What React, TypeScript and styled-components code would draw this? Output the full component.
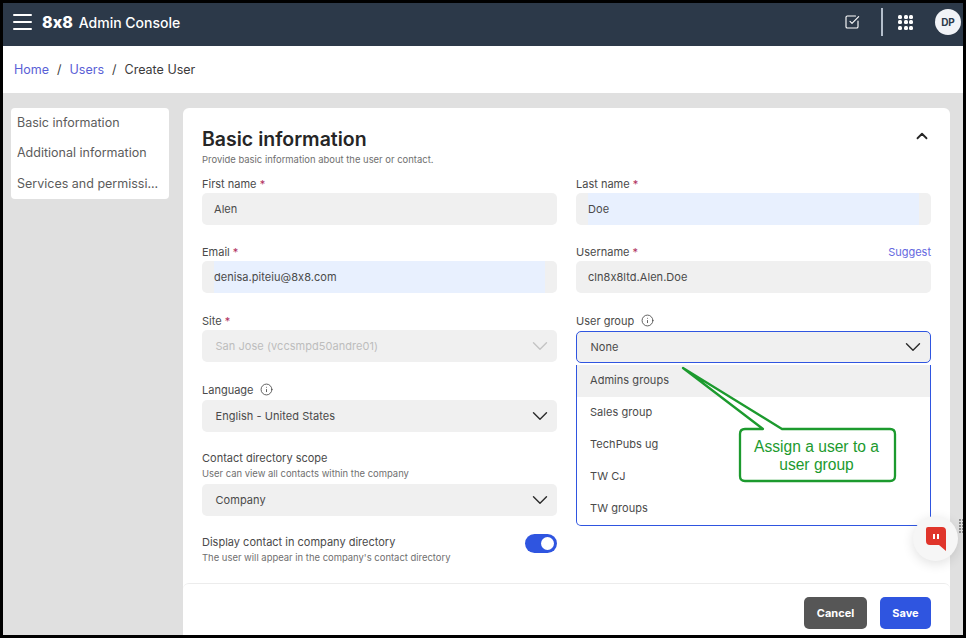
import React from 'react';
import styled, {createGlobalStyle} from 'styled-components';
import {ChevronDown, ChevronUp, Info, SquareCheckBig} from 'lucide-react';

const GlobalStyle = createGlobalStyle`
  html, body { margin: 0; padding: 0; }
  body { font-family: Inter, "Liberation Sans", sans-serif; color: #3b3b3b; }
  * { box-sizing: border-box; }
`;

const Page = styled.div`
  position: relative;
  width: 966px;
  height: 638px;
  border: 3px solid #000;
  background: #e0e0e0;
  display: flex;
  flex-direction: column;
  overflow: hidden;
`;

const TopBar = styled.header`
  height: 43px;
  flex: none;
  background: #2c3949;
  color: #fff;
  display: flex;
  align-items: center;
  padding: 0 10px 5px;
`;

const MenuBtn = styled.div`
  display: flex;
  flex-direction: column;
  gap: 5px;
  width: 19px;
  margin-right: 10px;
  > i { height: 2px; background: #fff; border-radius: 1px; }
`;

const Logo = styled.span`
  font-size: 16px;
  font-weight: 800;
  font-feature-settings: "calt" 0;
  margin-right: 6px;
`;

const AppName = styled.span`
  font-size: 14px;
  font-weight: 500;
`;

const TopActions = styled.div`
  margin-left: auto;
  display: flex;
  align-items: center;
`;

const Divider = styled.div`
  width: 2px;
  height: 28px;
  background: #b4bfcc;
  margin: 0 15px 0 21px;
`;

const AppsGrid = styled.div`
  display: grid;
  grid-template-columns: repeat(3, 4px);
  gap: 1.5px;
  margin-right: 22px;
  > i { width: 4px; height: 4px; border-radius: 1.5px; background: #fff; }
`;

const Avatar = styled.div`
  width: 26px;
  height: 26px;
  border-radius: 50%;
  background: #f1f3f7;
  color: #2c3949;
  font-size: 10px;
  font-weight: 700;
  display: flex;
  align-items: center;
  justify-content: center;
  margin-right: -8px;
`;

const Breadcrumbs = styled.nav`
  height: 47px;
  flex: none;
  background: #fff;
  display: flex;
  align-items: center;
  padding-left: 11px;
  font-size: 12.5px;
  color: #3b3b3b;
`;

const Crumb = styled.a`
  color: #5a5fd6;
`;

const Sep = styled.span`
  margin: 0 8px;
`;

const Body = styled.div`
  flex: 1;
  display: flex;
  align-items: flex-start;
  gap: 14px;
  padding: 15px 13px 0 8px;
  min-height: 0;
`;

const SideNav = styled.aside`
  width: 158px;
  flex: none;
  height: 91px;
  background: #fff;
  border-radius: 4px;
  padding: 0 6px;
`;

const SideItem = styled.div`
  height: 30.3px;
  display: flex;
  align-items: center;
  padding-bottom: 1px;
  font-size: 12.5px;
  color: #5c5c5c;
  white-space: nowrap;
  overflow: hidden;
`;

const Card = styled.section`
  flex: 1;
  height: 527px;
  background: #fff;
  border-radius: 6px 6px 0 0;
  display: flex;
  flex-direction: column;
`;

const CardBody = styled.div`
  flex: 1;
  padding: 20px 19px 0;
`;

const CardHead = styled.div`
  display: flex;
  justify-content: space-between;
  align-items: flex-start;
`;

const Title = styled.h2`
  margin: 0 0 3px;
  font-size: 19.5px;
  line-height: 22px;
  font-weight: 600;
  color: #262626;
`;

const Sub = styled.div`
  font-size: 9.45px;
  line-height: 13px;
  color: #6f6f6f;
`;

const Collapse = styled.div`
  display: flex;
  margin-top: -1px;
  color: #262626;
`;

const Columns = styled.div`
  display: grid;
  grid-template-columns: 355px 355px;
  column-gap: 19px;
  margin-top: 9px;
`;

const Column = styled.div`
  display: flex;
  flex-direction: column;
`;

const Field = styled.div<{$gap?: number}>`
  margin-bottom: ${p => p.$gap ?? 18}px;
`;

const LabelRow = styled.div<{$after?: number}>`
  display: flex;
  align-items: center;
  justify-content: space-between;
  height: 17px;
  margin-bottom: ${p => p.$after ?? 1}px;
  font-size: 11px;
  color: #4a4a4a;
`;

const LabelText = styled.span`
  display: flex;
  align-items: center;
  gap: 7px;
`;

const Required = styled.b`
  color: #b0305c;
  font-weight: 400;
`;

const Suggest = styled.a`
  color: #6468e0;
  font-size: 11px;
`;

const Control = styled.div<{$disabled?: boolean; $focus?: boolean; $select?: boolean}>`
  height: 32px;
  margin-top: ${p => (p.$focus ? 2 : 0)}px;
  border-radius: 5px;
  background: #f0f0f0;
  color: ${p => (p.$disabled ? '#bdbdbd' : '#4a4a4a')};
  border: ${p => (p.$focus ? '1px solid #2f55e0' : 'none')};
  display: flex;
  align-items: center;
  justify-content: space-between;
  padding: ${p => (p.$select ? '0 4px 0 13.5px' : '0 12px')};
  font-size: 11px;
  letter-spacing: 0.05px;
`;

// browser autofill paints only the inner input, the grey padding stays
const Autofilled = styled.span`
  flex: 1;
  align-self: stretch;
  display: flex;
  align-items: center;
  background: #e8f0fe;
`;

const Hint = styled.div`
  font-size: 9.45px;
  line-height: 12px;
  color: #6f6f6f;
  margin-bottom: 4px;
`;

const ToggleRow = styled.div`
  display: flex;
  justify-content: space-between;
  align-items: flex-start;
`;

const ToggleLabel = styled.div`
  font-size: 11px;
  line-height: 15px;
  margin-top: 1px;
  margin-bottom: 2px;
  color: #4a4a4a;
`;

const Toggle = styled.div`
  width: 32px;
  height: 19px;
  border-radius: 10px;
  background: #2f55e0;
  display: flex;
  align-items: center;
  justify-content: flex-end;
  padding-right: 3px;
  > i { width: 13px; height: 13px; border-radius: 50%; background: #fff; }
`;

const Footer = styled.footer`
  height: 52px;
  flex: none;
  border-top: 1px solid #ececec;
  border-radius: 6px 6px 0 0;
  display: flex;
  justify-content: flex-end;
  align-items: flex-start;
  gap: 13px;
  padding: 13px 19px 0 0;
`;

const Button = styled.button<{$primary?: boolean}>`
  width: ${p => (p.$primary ? 51 : 63)}px;
  height: 32px;
  border: none;
  border-radius: 5px;
  background: ${p => (p.$primary ? '#2f55e0' : '#565656')};
  color: #fff;
  font: 700 11px Inter, sans-serif;
`;

const Dropdown = styled.ul`
  position: absolute;
  left: 573px;
  top: 362px;
  width: 355px;
  height: 161px;
  margin: 0;
  padding: 0;
  list-style: none;
  background: #fff;
  border: 1px solid #2f55e0;
  border-top: none;
  border-radius: 0 0 5px 5px;
`;

const Option = styled.li<{$active?: boolean}>`
  height: 32px;
  display: flex;
  align-items: center;
  padding: 0 0 2px 13px;
  font-size: 11px;
  letter-spacing: 0.05px;
  color: #4a4a4a;
  background: ${p => (p.$active ? '#f0f0f0' : 'transparent')};
`;

const Callout = styled.svg`
  position: absolute;
  left: 678px;
  top: 362px;
`;

const CalloutText = styled.div`
  position: absolute;
  left: 736px;
  top: 427px;
  width: 155px;
  height: 52px;
  display: flex;
  align-items: center;
  justify-content: center;
  text-align: center;
  font-family: "Liberation Sans", sans-serif;
  font-size: 15.6px;
  line-height: 18.5px;
  color: #1c9a2e;
`;

const ChatBubble = styled.div`
  position: absolute;
  left: 910px;
  top: 513px;
  width: 45px;
  height: 45px;
  border-radius: 50%;
  background: #f6f6f6;
  box-shadow: 0 3px 12px rgba(0, 0, 0, 0.12);
  display: flex;
  align-items: center;
  justify-content: center;
`;

const Grip = styled.div`
  position: absolute;
  left: 956px;
  top: 516px;
  display: grid;
  grid-template-columns: repeat(2, 1.5px);
  gap: 1.5px;
  > i { width: 1.5px; height: 1.5px; background: #8a8a8a; }
`;

function Select({value, disabled, focus}: {value: string; disabled?: boolean; focus?: boolean}) {
  return (
    <Control $select $disabled={disabled} $focus={focus}>
      {value}
      <ChevronDown size={26} strokeWidth={1.3} color={disabled ? '#c4c4c4' : '#2b2b2b'} />
    </Control>
  );
}

const groups = ['Admins groups', 'Sales group', 'TechPubs ug', 'TW CJ', 'TW groups'];

export default function App() {
  return (
    <Page>
      <GlobalStyle />
      <TopBar>
        <MenuBtn><i /><i /><i /></MenuBtn>
        <Logo>8x8</Logo>
        <AppName>Admin Console</AppName>
        <TopActions>
          <SquareCheckBig size={16} strokeWidth={1.7} />
          <Divider />
          <AppsGrid>{Array.from({length: 9}).map((_, i) => <i key={i} />)}</AppsGrid>
          <Avatar>DP</Avatar>
        </TopActions>
      </TopBar>
      <Breadcrumbs>
        <Crumb>Home</Crumb><Sep>/</Sep><Crumb>Users</Crumb><Sep>/</Sep>Create User
      </Breadcrumbs>
      <Body>
        <SideNav>
          <SideItem>Basic information</SideItem>
          <SideItem>Additional information</SideItem>
          <SideItem>Services and permissi...</SideItem>
        </SideNav>
        <Card>
          <CardBody>
            <CardHead>
              <div>
                <Title>Basic information</Title>
                <Sub>Provide basic information about the user or contact.</Sub>
              </div>
              <Collapse><ChevronUp size={18} strokeWidth={2.4} /></Collapse>
            </CardHead>
            <Columns>
              <Column>
                <Field>
                  <LabelRow><LabelText><span>First name <Required>*</Required></span></LabelText></LabelRow>
                  <Control>Alen</Control>
                </Field>
                <Field $gap={19}>
                  <LabelRow><LabelText><span>Email <Required>*</Required></span></LabelText></LabelRow>
                  <Control><Autofilled>denisa.piteiu@8x8.com</Autofilled></Control>
                </Field>
                <Field $gap={19}>
                  <LabelRow><LabelText><span>Site <Required>*</Required></span></LabelText></LabelRow>
                  <Select value="San Jose (vccsmpd50andre01)" disabled />
                </Field>
                <Field $gap={17}>
                  <LabelRow $after={2}><LabelText>Language <Info size={13} strokeWidth={1.6} /></LabelText></LabelRow>
                  <Select value="English - United States" />
                </Field>
                <Field>
                  <LabelRow $after={2}><LabelText>Contact directory scope</LabelText></LabelRow>
                  <Hint>User can view all contacts within the company</Hint>
                  <Select value="Company" />
                </Field>
                <ToggleRow>
                  <div>
                    <ToggleLabel>Display contact in company directory</ToggleLabel>
                    <Hint>The user will appear in the company's contact directory</Hint>
                  </div>
                  <Toggle><i /></Toggle>
                </ToggleRow>
              </Column>
              <Column>
                <Field>
                  <LabelRow><LabelText><span>Last name <Required>*</Required></span></LabelText></LabelRow>
                  <Control><Autofilled>Doe</Autofilled></Control>
                </Field>
                <Field $gap={19}>
                  <LabelRow>
                    <LabelText><span>Username <Required>*</Required></span></LabelText>
                    <Suggest>Suggest</Suggest>
                  </LabelRow>
                  <Control>cln8x8ltd.Alen.Doe</Control>
                </Field>
                <Field>
                  <LabelRow><LabelText>User group <Info size={13} strokeWidth={1.6} /></LabelText></LabelRow>
                  <Select value="None" focus />
                </Field>
              </Column>
            </Columns>
          </CardBody>
          <Footer>
            <Button>Cancel</Button>
            <Button $primary>Save</Button>
          </Footer>
        </Card>
      </Body>
      <Dropdown>
        {groups.map((g, i) => <Option key={g} $active={i === 0}>{g}</Option>)}
      </Dropdown>
      <Callout width="220" height="122" viewBox="0 0 220 122">
        <path
          d="M2 3 L101 64 H209 Q214 64 214 69 V111 Q214 116 209 116 H64 Q59 116 59 111 V69 Q59 64 64 64 H82 Z"
          fill="#fff"
          stroke="#1c9a2e"
          strokeWidth="2.3"
          strokeLinejoin="round"
        />
      </Callout>
      <CalloutText>Assign a user to a user group</CalloutText>
      <ChatBubble>
        <svg width="20" height="24" viewBox="0 0 20 24">
          <path d="M2 0 H16 Q20 0 20 4 V24 L13 18 H4 Q0 18 0 14 V2 Q0 0 2 0 Z" fill="#e0352b" />
          <rect x="7" y="7" width="2" height="5" fill="#fff" />
          <rect x="11" y="7" width="2" height="5" fill="#fff" />
        </svg>
      </ChatBubble>
      <Grip>{Array.from({length: 10}).map((_, i) => <i key={i} />)}</Grip>
    </Page>
  );
}
